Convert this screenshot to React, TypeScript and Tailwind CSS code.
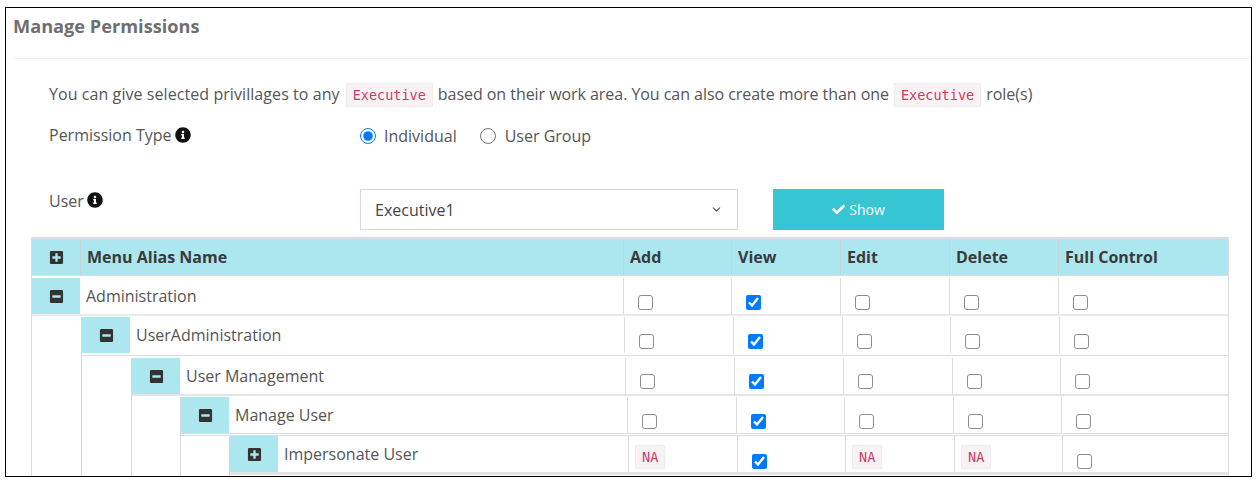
import React from 'react';
import { FaCheck, FaInfoCircle, FaMinusSquare, FaPlusSquare } from 'react-icons/fa';
import { ChevronDown } from 'lucide-react';

type Perm = 'off' | 'on' | 'na';

interface RowData {
  name: string;
  open: boolean;
  grid: string;
  boxTop: string;
  perms: Perm[];
}

const CodeChip = ({ children }: { children: React.ReactNode }) => (
  <code className="inline-block h-[24px] rounded-[2px] border border-[#eeeeee] bg-[#f9f2f4] px-[6px] font-['DejaVu_Sans_Mono',monospace] text-[13.5px] leading-[23px] text-[#cc3b62] shadow-[0_0_1px_rgba(0,0,0,0.12)]">
    {children}
  </code>
);

const Row = ({ row }: { row: RowData }) => (
  <div className={`grid ${row.grid} h-[36px] bg-white`}>
    <div className="flex items-center justify-center bg-[#ace7ef] text-[#333333]">
      {row.open ? <FaMinusSquare size={15} /> : <FaPlusSquare size={15} />}
    </div>
    <div className="flex items-center pl-[6px] text-[16px] text-[#555555]">{row.name}</div>
    {row.perms.map((perm, i) => (
      <div key={i} className={`border-l border-[#dddddd] ${perm === 'na' ? 'pl-[6px] pt-[8px]' : `pl-[14px] ${row.boxTop}`}`}>
        {perm === 'na' ? (
          <CodeChip>NA</CodeChip>
        ) : perm === 'on' ? (
          <input type="checkbox" readOnly checked className="block h-[15px] w-[15px] accent-[#007bff]" />
        ) : (
          <input
            type="checkbox"
            readOnly
            checked={false}
            className="block h-[15px] w-[15px] appearance-none rounded-[3px] border-[1.5px] border-[#8c8c8c] bg-white"
          />
        )}
      </div>
    ))}
  </div>
);

const rows: RowData[] = [
  {
    name: 'Administration',
    open: true,
    grid: 'grid-cols-[48px_543px_108px_109px_109px_109px_1fr]',
    boxTop: 'pt-[17px]',
    perms: ['off', 'on', 'off', 'off', 'off'],
  },
  {
    name: 'UserAdministration',
    open: true,
    grid: 'grid-cols-[48px_494px_109px_109px_108px_109px_1fr]',
    boxTop: 'pt-[17px]',
    perms: ['off', 'on', 'off', 'off', 'off'],
  },
  {
    name: 'User Management',
    open: true,
    grid: 'grid-cols-[48px_445px_109px_109px_109px_108px_1fr]',
    boxTop: 'pt-[16px]',
    perms: ['off', 'on', 'off', 'off', 'off'],
  },
  {
    name: 'Manage User',
    open: true,
    grid: 'grid-cols-[48px_398px_109px_108px_109px_108px_1fr]',
    boxTop: 'pt-[17px]',
    perms: ['off', 'on', 'off', 'off', 'off'],
  },
  {
    name: 'Impersonate User',
    open: false,
    grid: 'grid-cols-[48px_350px_109px_108px_109px_108px_1fr]',
    boxTop: 'pt-[18px]',
    perms: ['na', 'on', 'na', 'na', 'off'],
  },
];

const separators = [
  'h-[3px] border-t-2 border-[#eaeaea]',
  'my-[2px] h-[1px] bg-[#dedede]',
  'h-[3px] border-t-2 border-[#e4e4e4]',
  'h-[3px] border-y border-[#dcdcdc]',
  'h-[3px] bg-[#e4e4e4]',
];

const spacers = ['w-[50px]', 'w-[50px]', 'w-[49px]', 'w-[49px]'];

// each level sits about 50px in from its parent, with a guide line on the right of the gap
const Tree = ({ level }: { level: number }) => (
  <div>
    <Row row={rows[level]} />
    <div className={separators[level]} />
    {level < rows.length - 1 ? (
      <div className="flex">
        <div className={`${spacers[level]} shrink-0 border-r border-[#d8d8d8]`} />
        <div className="min-w-0 flex-1">
          <Tree level={level + 1} />
        </div>
      </div>
    ) : (
      <div className="h-[12px]" />
    )}
  </div>
);

export default function App() {
  return (
    <div className="h-[484px] w-[1258px] bg-white pl-[5px] pt-[7px] font-['Open_Sans',sans-serif] text-[16px] text-[#555555]">
      <div className="h-[470px] w-[1247px] overflow-hidden border border-black">
        <div className="ml-[7px] h-[51px] border-b border-[#f1f1f1] pt-[4px]">
          <h2 className="text-[18.2px] font-bold leading-[28px] text-[#6f6f6f]">Manage Permissions</h2>
        </div>

        <div className="pl-[43px] pt-[22px]">
          <p className="flex h-[26px] items-center whitespace-nowrap">
            <span className="tracking-[0.07px]">You can give selected privillages to any</span>
            <span className="ml-[6px]"><CodeChip>Executive</CodeChip></span>
            <span className="ml-[5px] tracking-[-0.05px]">based on their work area. You can also create more than one</span>
            <span className="ml-[5px]"><CodeChip>Executive</CodeChip></span>
            <span className="ml-[5px]">role(s)</span>
          </p>
          <div className="mt-[18px] flex h-[22px] items-center">
            <div className="flex w-[311px] items-center gap-[4px] pb-[3px]">
              Permission Type <FaInfoCircle size={16} className="text-[#111111]" />
            </div>
            <label className="flex items-center">
              <input type="radio" name="ptype" defaultChecked className="h-[16px] w-[16px] accent-[#007bff]" />
              <span className="ml-[8px]">Individual</span>
            </label>
            <label className="ml-[23px] flex items-center">
              <input type="radio" name="ptype" className="h-[16px] w-[16px]" />
              <span className="ml-[9px]">User Group</span>
            </label>
          </div>
          <div className="mt-[42px] flex h-[41px]">
            <div className="flex w-[311px] items-start gap-[3px]">
              User <FaInfoCircle size={16} className="mt-[3px] text-[#111111]" />
            </div>
            <div className="flex w-[378px] items-center justify-between border border-[#d5d8e2] pl-[14px] pr-[14px] text-[#444444]">
              Executive1
              <ChevronDown size={13} className="text-[#555555]" />
            </div>
            <button className="ml-[35px] flex w-[171px] items-center justify-center gap-[4px] bg-[#36c6d3] text-[14px] text-white">
              <FaCheck size={13} /> Show
            </button>
          </div>
        </div>

        <div className="ml-[25px] mt-[7px] w-[1198px] border-x border-t-2 border-[#dddddd]">
          <div className="grid h-[37px] grid-cols-[48px_543px_108px_109px_109px_109px_1fr] border-b border-[#dddddd] bg-[#ace7ef] font-bold text-[#3a3a3a]">
            <div className="flex items-center justify-center text-[#333333]">
              <FaPlusSquare size={15} />
            </div>
            <div className="flex items-center border-l border-[#c4d4d8] pl-[6px]">Menu Alias Name</div>
            {['Add', 'View', 'Edit', 'Delete', 'Full Control'].map((h) => (
              <div key={h} className="flex items-center border-l border-[#c4d4d8] pl-[6px]">
                {h}
              </div>
            ))}
          </div>
          <div className="pt-[2px]">
            <Tree level={0} />
          </div>
        </div>
      </div>
    </div>
  );
}
